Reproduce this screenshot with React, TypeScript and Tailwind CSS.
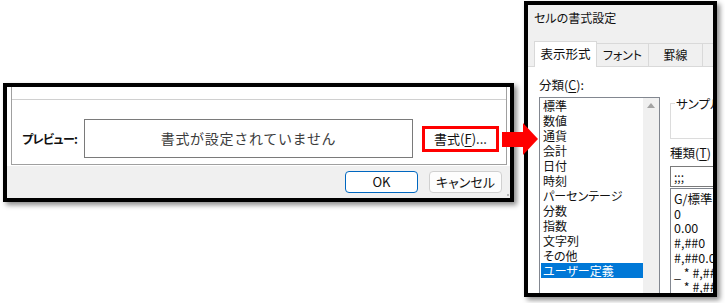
const jp = "font-['Noto_Sans_CJK_JP','Noto_Sans',sans-serif]";

const categories = [
  "標準",
  "数値",
  "通貨",
  "会計",
  "日付",
  "時刻",
  "パーセンテージ",
  "分数",
  "指数",
  "文字列",
  "その他",
  "ユーザー定義",
];

const formats = [
  "G/標準",
  "0",
  "0.00",
  "#,##0",
  "#,##0.00",
  "_ * #,##0_ ;_ * -#,##0_ ;_ * \"-\"_ ;_ @_",
  "_ * #,##0.00_ ;_ * -#,##0.00_ ;",
];

function Underlined({ ch }: { ch: string }) {
  return <span className="underline underline-offset-2">{ch}</span>;
}

function PreviewDialog() {
  return (
    <div className="ml-[3px] mt-[83px] w-[511px] h-[119px] shrink-0 border-4 border-black bg-[#f0f0f0] flex flex-col shadow-[3px_3px_5px_rgba(0,0,0,0.45)]">
      <div className="h-[79px] shrink-0 bg-white pl-[4px] pr-[3px]">
        <div className="h-[78px] border-l border-r border-b border-[#a0a0a0] flex flex-col">
          <div className="h-[12px] shrink-0" />
          <div className="h-px shrink-0 bg-[#d0d0d0]" />
          <div className="flex items-center pt-[19px] pl-[10px]">
            <span className="w-[62px] shrink-0 whitespace-nowrap text-[12px] tracking-[-0.6px] font-bold text-[#111] [font-feature-settings:'palt']">
              プレビュー:
            </span>
            <div className="w-[329px] h-[39px] shrink-0 border border-[#7a7a7a] flex items-center justify-center text-[14px] tracking-[0.7px] text-[#3c3c3c]">
              書式が設定されていません
            </div>
            <div className="ml-[9px] w-[77px] h-[26px] shrink-0 border-[3px] border-[#ff0000] flex items-center justify-center whitespace-nowrap text-[13px] text-[#111] leading-none">
              書式(<Underlined ch="F" />)...
            </div>
          </div>
        </div>
      </div>
      <div className="relative flex-1 flex justify-end items-start pt-[5px] pr-[8px] gap-[11px] text-[13px] text-[#111] [font-feature-settings:'palt']">
        <button className="w-[73px] h-[22px] rounded-[4px] border border-[#0067c0] bg-white flex items-center justify-center">
          OK
        </button>
        <button className="w-[73px] h-[22px] rounded-[4px] border border-[#d0d0d0] bg-[#fdfdfd] flex items-center justify-center">
          キャンセル
        </button>
        <span className="absolute right-[1px] bottom-[2px] w-[2px] h-[2px] bg-[#b8b8b8]" />
      </div>
    </div>
  );
}

function FormatDialog() {
  return (
    <div className="ml-[10px] mt-[1px] w-[193px] h-[296px] shrink-0 border-4 border-black bg-[#f0f0f0] overflow-hidden flex flex-col shadow-[3px_3px_5px_rgba(0,0,0,0.45)] text-[12px] text-[#111] [font-feature-settings:'palt']">
      <div className="h-[37px] shrink-0 pl-[6px] pt-[4px] leading-[18px] whitespace-nowrap">セルの書式設定</div>
      <div className="h-[25px] shrink-0 flex items-end pl-[6px] border-b border-[#d9d9d9] whitespace-nowrap">
        <div className="w-[63px] h-[26px] -mb-px bg-white border-l border-t border-r border-[#d9d9d9] flex items-center justify-center text-[12.5px] shrink-0">
          表示形式
        </div>
        <div className="w-[52px] h-[23px] border-t border-r border-[#d9d9d9] flex items-center justify-center shrink-0">
          フォント
        </div>
        <div className="w-[54px] h-[23px] border-t border-r border-[#d9d9d9] flex items-center justify-center shrink-0">
          罫線
        </div>
        <div className="w-[50px] h-[23px] border-t border-[#d9d9d9] shrink-0" />
      </div>
      <div className="flex-1 min-h-0 bg-white flex items-start whitespace-nowrap">
        <div className="pl-[11px] pt-[9px] shrink-0">
          <div className="leading-[18px] text-[12.5px]">
            分類(<Underlined ch="C" />):
          </div>
          <div className="mt-[3px] w-[121px] h-[200px] border border-[#828790] flex">
            <div className="w-[103px] pl-px">
              {categories.map((c) => (
                <div
                  key={c}
                  className={`h-[15px] leading-[15px] pl-[2px] ${
                    c === "ユーザー定義" ? "bg-[#0078d7] text-white" : ""
                  }`}
                >
                  {c}
                </div>
              ))}
            </div>
            <div className="w-[16px] bg-[#f0f0f0] flex justify-center pt-[5px]">
              <svg width="8" height="5" viewBox="0 0 8 5">
                <polygon points="4,0 8,5 0,5" fill="#a3a3a3" />
              </svg>
            </div>
          </div>
        </div>
        <div className="ml-[10px] pt-[29px] shrink-0">
          <fieldset className="w-[150px] h-[43px] border border-[#dcdcdc] pl-[4px]">
            <legend className="leading-[15px] px-px text-[12.5px]">サンプル</legend>
          </fieldset>
          <div className="mt-[6px] leading-[16px] text-[12.5px]">
            種類(<Underlined ch="T" />)
          </div>
          <div className="mt-[5px] w-[150px] h-[21px] border border-[#7a7a7a] pl-[3px] leading-[19px]">
            ;;;
          </div>
          <div className="mt-px w-[150px] h-[120px] border border-[#828790] pl-[3px] pt-[3px] text-[12.5px]">
            {formats.map((f) => (
              <div key={f} className="leading-[14.7px]">
                {f}
              </div>
            ))}
          </div>
        </div>
      </div>
    </div>
  );
}

export default function App() {
  return (
    <div className={`relative w-[725px] h-[303px] bg-white overflow-hidden flex items-start ${jp}`}>
      <PreviewDialog />
      <FormatDialog />
      <svg
        className="absolute left-[502px] top-[122px]"
        width="38"
        height="34"
        viewBox="0 0 38 34"
      >
        <polygon points="0,10 21,10 21,1 36,17 21,33 21,25 0,25" fill="#ff0000" />
      </svg>
    </div>
  );
}
